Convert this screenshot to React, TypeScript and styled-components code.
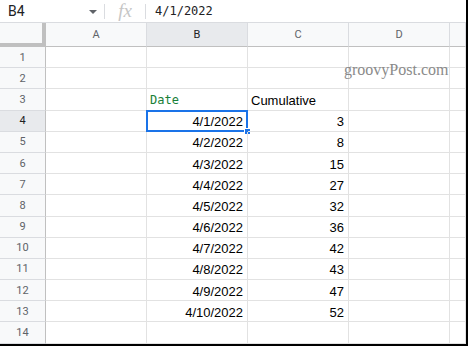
import React from "react";
import styled, { createGlobalStyle } from "styled-components";

const GlobalStyle = createGlobalStyle`
  html, body {
    margin: 0;
    padding: 0;
    background: #fff;
    overflow: hidden;
  }
  * {
    box-sizing: border-box;
  }
`;

const COLUMNS = ["A", "B", "C", "D", ""];
const ROW_COUNT = 14;
const SELECTED_ROW = 4;
const SELECTED_COL = "B";

const dates = [
  "4/1/2022",
  "4/2/2022",
  "4/3/2022",
  "4/4/2022",
  "4/5/2022",
  "4/6/2022",
  "4/7/2022",
  "4/8/2022",
  "4/9/2022",
  "4/10/2022",
];
const totals = [3, 8, 15, 27, 32, 36, 42, 43, 47, 52];

type CellValue = { text: string; kind?: "number" | "label" | "title" };

const getCell = (row: number, col: string): CellValue | null => {
  if (row === 3 && col === "B") return { text: "Date", kind: "title" };
  if (row === 3 && col === "C") return { text: "Cumulative", kind: "label" };
  const idx = row - 4;
  if (idx >= 0 && idx < dates.length) {
    if (col === "B") return { text: dates[idx], kind: "number" };
    if (col === "C") return { text: String(totals[idx]), kind: "number" };
  }
  return null;
};

const App = () => {
  const rows = Array.from({ length: ROW_COUNT }, (_, i) => i + 1);

  return (
    <>
      <GlobalStyle />
      <Frame>
        <FormulaBar>
          <NameBox>
            <span>B4</span>
            <Caret />
          </NameBox>
          <Divider />
          <FxLabel>fx</FxLabel>
          <Divider />
          <FormulaText>4/1/2022</FormulaText>
        </FormulaBar>

        <Grid>
          <Corner />
          {COLUMNS.map((col, i) => (
            <ColumnHeader key={`h-${i}`} $active={col === SELECTED_COL}>
              {col}
            </ColumnHeader>
          ))}

          {rows.map((row) => (
            <React.Fragment key={row}>
              <RowHeader $active={row === SELECTED_ROW}>{row}</RowHeader>
              {COLUMNS.map((col, i) => {
                const value = getCell(row, col);
                const selected = row === SELECTED_ROW && col === SELECTED_COL;
                return (
                  <Cell
                    key={`${row}-${i}`}
                    $align={value?.kind === "number" ? "right" : "left"}
                  >
                    {value?.kind === "title" ? (
                      <TitleText>{value.text}</TitleText>
                    ) : (
                      value?.text
                    )}
                    {selected && (
                      <Selection>
                        <FillHandle />
                      </Selection>
                    )}
                  </Cell>
                );
              })}
            </React.Fragment>
          ))}
        </Grid>

        <Watermark>groovyPost.com</Watermark>
      </Frame>
    </>
  );
};

export default App;

const Frame = styled.div`
  position: relative;
  width: 468px;
  height: 346px;
  overflow: hidden;
  background: #fff;
  border-right: 2px solid #000;
  border-bottom: 2px solid #000;
  font-family: Arial, "Liberation Sans", sans-serif;
`;

const FormulaBar = styled.div`
  display: flex;
  align-items: center;
  height: 23px;
  border-bottom: 1px solid #dadce0;
`;

const NameBox = styled.div`
  display: flex;
  align-items: center;
  justify-content: space-between;
  width: 104px;
  padding: 0 7px 0 8px;
  font-family: Roboto, Arial, sans-serif;
  font-size: 14px;
  color: #202124;
`;

const Caret = styled.span`
  width: 0;
  height: 0;
  border-left: 4px solid transparent;
  border-right: 4px solid transparent;
  border-top: 4px solid #5f6368;
  margin-top: 2px;
`;

const Divider = styled.span`
  width: 1px;
  height: 15px;
  background: #dadce0;
`;

const FxLabel = styled.span`
  width: 40px;
  text-align: center;
  font-family: "Liberation Serif", serif;
  font-style: italic;
  font-size: 19px;
  line-height: 1;
  color: #c6c6c6;
  margin-top: -2px;
`;

const FormulaText = styled.span`
  padding-left: 9px;
  font-family: "DejaVu Sans Mono", monospace;
  font-size: 12px;
  color: #202124;
`;

const Grid = styled.div`
  display: grid;
  grid-template-columns: 46px repeat(4, 101px) 1fr;
  grid-template-rows: 24px repeat(14, 21.2px);
`;

const Corner = styled.div`
  background: #f8f9fa;
  border-right: 4px solid #c0c0c0;
  border-bottom: 4px solid #c0c0c0;
  margin-right: 0;
`;

const ColumnHeader = styled.div<{ $active?: boolean }>`
  display: flex;
  align-items: center;
  justify-content: center;
  background: ${({ $active }) => ($active ? "#e8eaed" : "#f8f9fa")};
  border-right: 1px solid #dadce0;
  border-bottom: 1px solid #c0c0c0;
  font-family: Roboto, Arial, sans-serif;
  font-size: 11px;
  color: ${({ $active }) => ($active ? "#202124" : "#5f6368")};
`;

const RowHeader = styled.div<{ $active?: boolean }>`
  display: flex;
  align-items: center;
  justify-content: center;
  background: ${({ $active }) => ($active ? "#e8eaed" : "#f8f9fa")};
  border-right: 1px solid #c0c0c0;
  border-bottom: 1px solid #dadce0;
  font-family: Roboto, Arial, sans-serif;
  font-size: 11px;
  color: ${({ $active }) => ($active ? "#202124" : "#5f6368")};
`;

const Cell = styled.div<{ $align: "left" | "right" }>`
  position: relative;
  display: flex;
  align-items: center;
  justify-content: ${({ $align }) => ($align === "right" ? "flex-end" : "flex-start")};
  padding: 2px 4px 0 3px;
  border-right: 1px solid #e2e2e2;
  border-bottom: 1px solid #e2e2e2;
  font-family: "Liberation Sans", Arial, sans-serif;
  font-size: 13px;
  color: #000;
  white-space: nowrap;
`;

const TitleText = styled.span`
  font-family: "DejaVu Sans Mono", monospace;
  font-size: 12px;
  color: #188038;
`;

const Selection = styled.div`
  position: absolute;
  top: -1px;
  left: -1px;
  right: -1px;
  bottom: -1px;
  border: 2px solid #1a73e8;
  pointer-events: none;
`;

const FillHandle = styled.span`
  position: absolute;
  right: -5px;
  bottom: -5px;
  width: 7px;
  height: 7px;
  background: #1a73e8;
  border: 1px solid #fff;
`;

const Watermark = styled.div`
  position: absolute;
  left: 344px;
  top: 61px;
  font-family: "Liberation Serif", serif;
  font-size: 16px;
  color: #8a8a8a;
  pointer-events: none;
`;
